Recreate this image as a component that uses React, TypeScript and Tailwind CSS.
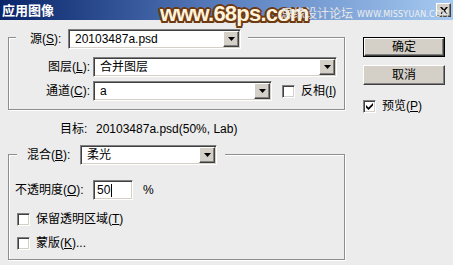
import React from "react";

const sunken =
  "border border-t-[#808080] border-l-[#808080] border-r-white border-b-white shadow-[inset_1px_1px_0_#404040,inset_-1px_-1px_0_#d4d0c8]";

function Arrow() {
  return (
    <svg width="7" height="4" viewBox="0 0 7 4">
      <path d="M0 0H7L3.5 4Z" fill="#000" />
    </svg>
  );
}

function Combo({ className, text }: { className: string; text: string }) {
  return (
    <div className={`flex h-[20px] bg-white ${sunken} ${className}`}>
      <div className="flex-1 pl-[6px] text-[12px] leading-[18px] whitespace-nowrap overflow-hidden">
        {text}
      </div>
      <div className="m-[1px] w-[16px] flex items-center justify-center bg-[#d4d0c8] border border-t-white border-l-white border-r-[#404040] border-b-[#404040] shadow-[inset_-1px_-1px_0_#808080]">
        <Arrow />
      </div>
    </div>
  );
}

function Check({ checked }: { checked?: boolean }) {
  return (
    <div
      className={`w-[13px] h-[13px] bg-white flex items-center justify-center shrink-0 ${sunken}`}
    >
      {checked && (
        <svg width="7" height="7" viewBox="0 0 7 7">
          <path d="M0 2L0 4.5L2.5 7L7 2.5L7 0L2.5 4.5Z" fill="#000" />
        </svg>
      )}
    </div>
  );
}

export default function App() {
  return (
    <div className="w-[453px] h-[265px] bg-[#ececec] overflow-hidden relative text-black font-['Liberation_Sans','Noto_Sans_CJK_SC',sans-serif]">
      {/* Title bar */}
      <div className="h-[20px] flex items-center justify-between bg-gradient-to-r from-[#0a246a] via-[#5a7fbf] to-[#a6caf0]">
        <div className="pl-[2px] text-white font-bold text-[13px] leading-[16px] font-['Noto_Sans_CJK_SC',sans-serif]">
          应用图像
        </div>
        <div className="mr-[2px] mt-[0px] w-[15px] h-[14px] bg-[#d4d0c8] flex items-center justify-center border border-t-white border-l-white border-r-[#404040] border-b-[#404040] shadow-[inset_-1px_-1px_0_#808080]">
          <svg width="8" height="7" viewBox="0 0 8 7">
            <path d="M0 0H2L4 2.5L6 0H8L5 3.5L8 7H6L4 4.5L2 7H0L3 3.5Z" fill="#000" />
          </svg>
        </div>
      </div>

      {/* Watermark overlay */}
      <div
        className="absolute left-[160px] top-[0px] text-[22px] font-bold tracking-[-0.8px] text-[#fff3dc] font-['Liberation_Sans',sans-serif] leading-[28px]"
        style={{
          textShadow:
            "2px 0 0 #6e3a12, -2px 0 0 #6e3a12, 0 2px 0 #6e3a12, 0 -2px 0 #6e3a12, 1.5px 1.5px 0 #6e3a12, -1.5px -1.5px 0 #6e3a12, 1.5px -1.5px 0 #6e3a12, -1.5px 1.5px 0 #6e3a12",
        }}
      >
        www.68ps.com
      </div>
      <div className="absolute left-[281px] top-[5px] text-[12px] leading-[16px] text-[#e6e6e6] font-['Noto_Sans_CJK_SC',sans-serif]">
        思缘设计论坛
      </div>
      <div className="absolute left-[357px] top-[10px] text-[8px] leading-[10px] text-[#f0f0f0] tracking-[0.2px] font-['DejaVu_Sans',sans-serif]">
        WWW.MISSYUAN.COM
      </div>

      {/* Body */}
      <div className="flex text-[12px]">
        {/* Left column */}
        <div className="ml-[8px] w-[337px]">
          {/* Group 1 */}
          <div className="mt-[17px] border border-[#8e8e8e] shadow-[1px_1px_0_#fff,inset_1px_1px_0_#fff] pb-[8px]">
            <div className="flex">
              <div className="mt-[-9px] ml-[7px] pl-[14px] pr-[7px] bg-[#ececec] flex items-center">
                <div className="w-[33px] leading-[20px] whitespace-nowrap">
                  源(<u>S</u>):
                </div>
                <Combo className="ml-[5px] w-[173px]" text="20103487a.psd" />
              </div>
            </div>
            <div className="mt-[8px] flex items-center">
              <div className="w-[81px] text-right leading-[20px] whitespace-nowrap">
                图层(<u>L</u>):
              </div>
              <Combo className="ml-[3px] w-[244px]" text="合并图层" />
            </div>
            <div className="mt-[4px] flex items-center">
              <div className="w-[81px] text-right leading-[20px] whitespace-nowrap">
                通道(<u>C</u>):
              </div>
              <Combo className="ml-[3px] w-[179px]" text="a" />
              <div className="ml-[10px] flex items-center">
                <Check />
                <span className="ml-[6px] leading-[16px] whitespace-nowrap">
                  反相(<u>I</u>)
                </span>
              </div>
            </div>
          </div>

          {/* Target */}
          <div className="mt-[12px] ml-[52px] flex leading-[14px] whitespace-nowrap">
            <span className="w-[36px]">目标:</span>
            <span>20103487a.psd(50%, Lab)</span>
          </div>

          {/* Group 2 */}
          <div className="mt-[18px] border border-[#8e8e8e] shadow-[1px_1px_0_#fff,inset_1px_1px_0_#fff] pb-[8px]">
            <div className="flex">
              <div className="mt-[-10px] ml-[8px] pl-[10px] pr-[8px] bg-[#ececec] flex items-center">
                <div className="w-[50px] leading-[20px] whitespace-nowrap">
                  混合(<u>B</u>):
                </div>
                <Combo className="ml-[3px] w-[137px]" text="柔光" />
              </div>
            </div>
            <div className="mt-[15px] flex items-center">
              <div className="ml-[6px] w-[78px] leading-[20px] whitespace-nowrap">
                不透明度(<u>O</u>):
              </div>
              <div className={`w-[40px] h-[20px] bg-white ${sunken} flex items-center pl-[3px]`}>
                <span className="leading-[16px]">50</span>
                <span className="ml-[1px] w-[1px] h-[13px] bg-black" />
              </div>
              <span className="ml-[10px]">%</span>
            </div>
            <div className="mt-[11px] ml-[8px] flex items-center">
              <Check />
              <span className="ml-[6px] leading-[16px] whitespace-nowrap">
                保留透明区域(<u>T</u>)
              </span>
            </div>
            <div className="mt-[8px] ml-[8px] flex items-center">
              <Check />
              <span className="ml-[6px] leading-[16px] whitespace-nowrap">
                蒙版(<u>K</u>)...
              </span>
            </div>
          </div>
        </div>

        {/* Right column */}
        <div className="ml-[18px] w-[82px] flex flex-col">
          <div className="mt-[17px] h-[20px] border border-black">
            <div className="h-full bg-[#d4d0c8] flex items-center justify-center border border-t-white border-l-white border-r-[#404040] border-b-[#404040] shadow-[inset_-1px_-1px_0_#808080] leading-[14px]">
              确定
            </div>
          </div>
          <div className="mt-[8px] h-[20px] bg-[#d4d0c8] flex items-center justify-center border border-t-white border-l-white border-r-[#404040] border-b-[#404040] shadow-[inset_-1px_-1px_0_#808080] leading-[14px]">
            取消
          </div>
          <div className="mt-[13px] flex items-center">
            <Check checked />
            <span className="ml-[6px] leading-[16px] whitespace-nowrap">
              预览(<u>P</u>)
            </span>
          </div>
        </div>
      </div>
    </div>
  );
}
